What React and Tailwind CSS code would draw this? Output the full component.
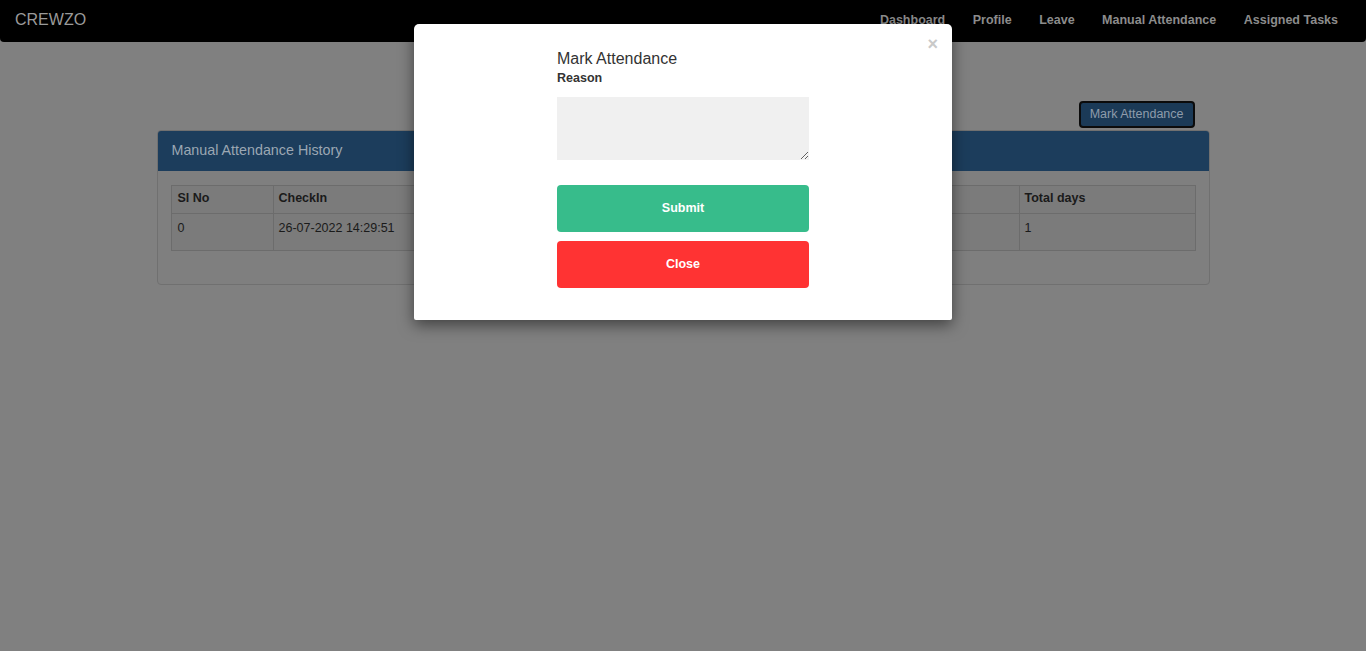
export default function App() {
  const font = { fontFamily: '"Liberation Sans", Arial, sans-serif' };
  return (
    <div className="relative min-h-[651px] w-full bg-[#808080]" style={font}>
      {/* Navbar */}
      <nav className="flex h-[42px] items-center justify-between rounded-b-[4px] bg-black pb-[2px] pl-[15px] pr-[28px]">
        <span className="text-[16px] text-[#9a9a9a]">CREWZO</span>
        <div className="flex items-center gap-[27.5px] text-[12.5px] font-bold text-[#8c8c8c]">
          <span>Dashboard</span>
          <span>Profile</span>
          <span>Leave</span>
          <span>Manual Attendance</span>
          <span>Assigned Tasks</span>
        </div>
      </nav>

      {/* Page content */}
      <div className="mx-auto w-[1053px]">
        <div className="flex justify-end pr-[15px] pt-[59px]">
          <button className="h-[27px] rounded-[4px] border-2 border-[#0b0b0b] bg-[#1b3a57] px-[9px] text-[12.5px] text-[#8e9cab]">
            Mark Attendance
          </button>
        </div>
        <div className="mt-[2px] rounded-[4px] border border-[#707070] bg-[#7f7f7f]">
          <div className="flex h-[40px] items-center rounded-t-[3px] bg-[#1c3d5c] px-[14px] text-[14.3px] text-[#9ba7b3]">
            Manual Attendance History
          </div>
          <div className="px-[13px] pb-[33px] pt-[14px]">
            <table className="w-full border-collapse text-[12.5px] text-[#1a1a1a]">
              <thead>
                <tr className="h-[28px] bg-[#7b7b7b]">
                  <th className="w-[102px] border border-[#6c6c6c] px-[6px] pb-[2px] text-left font-bold">Sl No</th>
                  <th className="w-[230px] border border-[#6c6c6c] px-[5px] pb-[2px] text-left font-bold">CheckIn</th>
                  <th className="w-[230px] border border-[#6c6c6c] px-[5px] pb-[2px] text-left font-bold">CheckOut</th>
                  <th className="border border-[#6c6c6c] px-[5px] pb-[2px] text-left font-bold">Reason</th>
                  <th className="w-[176px] border border-[#6c6c6c] px-[5px] pb-[2px] text-left font-bold">Total days</th>
                </tr>
              </thead>
              <tbody>
                <tr className="h-[37px] bg-[#7b7b7b]">
                  <td className="border border-[#6c6c6c] px-[6px] pt-[5px] align-top">0</td>
                  <td className="border border-[#6c6c6c] px-[5px] pt-[5px] align-top">26-07-2022 14:29:51</td>
                  <td className="border border-[#6c6c6c] px-[5px] pt-[5px] align-top">26-07-2022 18:30:12</td>
                  <td className="border border-[#6c6c6c] px-[5px] pt-[5px] align-top">Work from home</td>
                  <td className="border border-[#6c6c6c] px-[5px] pt-[5px] align-top">1</td>
                </tr>
              </tbody>
            </table>
          </div>
        </div>
      </div>

      {/* Modal */}
      <div className="absolute left-[414px] top-[24px] h-[296px] w-[538px] rounded-t-[5px] rounded-b-[2px] bg-white shadow-[0_5px_15px_rgba(0,0,0,0.5)]">
        <span className="absolute right-[14px] top-[11px] text-[18px] font-bold leading-none text-[#c9c9c9]">×</span>
        <div className="mx-auto flex w-[252px] flex-col pt-[26px]">
          <h4 className="text-[16px] leading-[18px] text-[#333]">Mark Attendance</h4>
          <label className="mt-[2px] text-[12.5px] font-bold leading-[16px] text-[#333]">Reason</label>
          <textarea className="mt-[11px] h-[63px] w-[252px] resize-y bg-[#f0f0f0] outline-none" />
          <button className="mt-[25px] h-[47px] rounded-[4px] bg-[#37bc8b] text-[12.5px] font-bold text-white">
            Submit
          </button>
          <button className="mt-[9px] h-[47px] rounded-[4px] bg-[#ff3333] text-[12.5px] font-bold text-white">
            Close
          </button>
        </div>
      </div>
    </div>
  );
}
